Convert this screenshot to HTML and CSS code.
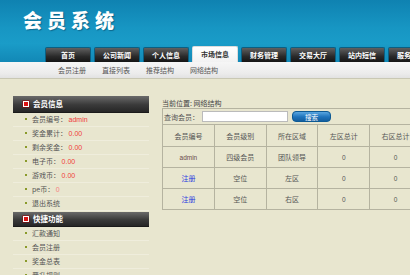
FILE: index.html
```html
<!DOCTYPE html>
<html lang="zh-CN">
<head>
    <meta charset="UTF-8">
    <title>会员系统</title>
    <link rel="stylesheet" href="styles.css">
</head>
<body>
    <div class="header">
        <div class="logo">会员系统</div>
        <div class="nav">
            <a class="tab">首页</a>
            <a class="tab">公司新闻</a>
            <a class="tab">个人信息</a>
            <a class="tab active">市场信息</a>
            <a class="tab">财务管理</a>
            <a class="tab">交易大厅</a>
            <a class="tab">站内短信</a>
            <a class="tab">服务中心</a>
        </div>
    </div>

    <div class="subnav">
        <a>会员注册</a>
        <a>直接列表</a>
        <a>推荐结构</a>
        <a>网络结构</a>
    </div>

    <div class="content">
        <div class="sidebar">
            <div class="side-title"><span class="mark"></span>会员信息</div>
            <ul class="side-list">
                <li>会员编号： <span class="val">admin</span></li>
                <li>奖金累计： <span class="val">0.00</span></li>
                <li>剩余奖金： <span class="val">0.00</span></li>
                <li>电子币： <span class="val">0.00</span></li>
                <li>游戏币： <span class="val">0.00</span></li>
                <li>pe币： <span class="val zero">0</span></li>
                <li>退出系统</li>
            </ul>
            <div class="side-title"><span class="mark"></span>快捷功能</div>
            <ul class="side-list">
                <li>汇款通知</li>
                <li>会员注册</li>
                <li>奖金总表</li>
                <li>晋升规则</li>
            </ul>
        </div>

        <div class="main">
            <div class="crumb">当前位置: 网络结构</div>
            <table class="grid">
                <tr class="search">
                    <td colspan="5">
                        <div class="search-row">
                            <span>查询会员：</span>
                            <input type="text" class="search-box">
                            <button class="btn">搜索</button>
                        </div>
                    </td>
                </tr>
                <tr class="head">
                    <td class="c1">会员编号</td>
                    <td class="c2">会员级别</td>
                    <td class="c3">所在区域</td>
                    <td class="c4">左区总计</td>
                    <td class="c5">右区总计</td>
                </tr>
                <tr>
                    <td class="user">admin</td>
                    <td>四级会员</td>
                    <td>团队领导</td>
                    <td class="num">0</td>
                    <td class="num">0</td>
                </tr>
                <tr>
                    <td><a class="reg">注册</a></td>
                    <td>空位</td>
                    <td>左区</td>
                    <td class="num">0</td>
                    <td class="num">0</td>
                </tr>
                <tr>
                    <td><a class="reg">注册</a></td>
                    <td>空位</td>
                    <td>右区</td>
                    <td class="num">0</td>
                    <td class="num">0</td>
                </tr>
            </table>
        </div>
    </div>
</body>
</html>
```

FILE: styles.css
```css
body {
    margin: 0;
    width: 540px;
    overflow: hidden;
    background-color: #e8e6cf;
    font-family: "Noto Sans CJK SC", "Liberation Sans", sans-serif;
    font-size: 7px;
    color: #555;
}

a {
    cursor: pointer;
}

.header {
    height: 62px;
    display: flex;
    flex-direction: column;
    background: linear-gradient(to bottom, #0f82b1 0%, #1796c3 45%, #1a9cc8 70%, #1288b6 100%);
}

.logo {
    padding: 10px 0 0 23px;
    font-size: 19px;
    line-height: 20px;
    font-weight: 900;
    letter-spacing: 5px;
    color: #fff;
    text-shadow: 1px 1px 1px rgba(0, 60, 90, 0.5);
}

.nav {
    margin-top: auto;
    padding-left: 45px;
    display: flex;
    gap: 3px;
    align-items: flex-end;
}

.tab {
    width: 44px;
    height: 14px;
    line-height: 14px;
    text-align: center;
    font-weight: bold;
    white-space: nowrap;
    color: #fff;
    background: linear-gradient(to bottom, #606060, #2a2a2a 60%, #151515);
    border: 1px solid #0b5f82;
    border-bottom: none;
    border-radius: 2px 2px 0 0;
}

.tab.active {
    height: 15px;
    line-height: 15px;
    color: #333;
    background: linear-gradient(to bottom, #ffffff, #f2f2f2);
    border-color: #dcdcdc;
}

.subnav {
    height: 16px;
    padding-left: 58px;
    display: flex;
    align-items: center;
    background: linear-gradient(to bottom, #f6f6f6, #ececec 70%, #e2e2e2);
    border-bottom: 1px solid #c9c8b4;
}

.subnav a {
    width: 44px;
    white-space: nowrap;
    color: #555;
}

.content {
    display: flex;
    align-items: flex-start;
}

.sidebar {
    width: 136px;
    margin: 17px 0 0 13px;
}

.side-title {
    height: 16px;
    line-height: 16px;
    padding-left: 10px;
    display: flex;
    align-items: center;
    gap: 4px;
    font-size: 7.5px;
    font-weight: bold;
    color: #fff;
    background: linear-gradient(to bottom, #6a6a6a, #3a3a3a 55%, #262626);
    border-bottom: 1px solid #1a1a1a;
}

.side-list + .side-title {
    margin-top: 1px;
    height: 14px;
    line-height: 14px;
}

.mark {
    width: 4px;
    height: 4px;
    background: #d11;
    border: 1px solid #fff;
    box-shadow: 0 0 0 0.5px #900;
}

.side-list {
    margin: 0;
    padding: 0;
    list-style: none;
}

.side-list li {
    height: 13px;
    line-height: 13px;
    padding-left: 19px;
    position: relative;
    border-bottom: 1px solid #efeddc;
    color: #555;
    white-space: nowrap;
}

.side-list li::before {
    content: "";
    position: absolute;
    left: 12px;
    top: 5px;
    width: 2px;
    height: 2px;
    background: #8a9a2a;
}

.val {
    color: #f03c3c;
    font-family: "Liberation Sans", sans-serif;
}

.val.zero {
    color: #f78080;
}

.main {
    margin: 19px 0 0 13px;
}

.crumb {
    height: 10px;
    line-height: 10px;
    color: #444;
}

.grid {
    width: 260px;
    border-collapse: collapse;
    table-layout: fixed;
}

.grid td {
    border: 1px solid #b5b3a0;
    text-align: center;
    padding: 0;
    height: 20px;
    white-space: nowrap;
}

.grid tr.search td {
    height: 15px;
    text-align: left;
}

.search-row {
    display: flex;
    align-items: center;
    gap: 3px;
    padding-left: 1px;
}

.search-box {
    width: 84px;
    height: 9px;
    margin: 0;
    padding: 0;
    border: 1px solid #bbb;
    background: #fff;
}

.btn {
    width: 39px;
    height: 11px;
    padding: 0;
    margin-left: 1px;
    font-family: inherit;
    font-size: 6.5px;
    line-height: 10px;
    color: #fff;
    border: 1px solid #0e5a94;
    border-radius: 4px;
    background: linear-gradient(to bottom, #59a6e0, #1e73bb 55%, #145f9f);
}

.grid tr.head td {
    height: 21px;
}

.c1 { width: 60px; }
.c2 { width: 48px; }
.c3 { width: 48px; }
.c4 { width: 47px; }
.c5 { width: 47px; }

.user {
    font-family: "Liberation Sans", sans-serif;
    color: #6a4a4a;
    font-size: 6.5px;
}

.num {
    font-family: "Liberation Sans", sans-serif;
    font-size: 6.5px;
}

.reg {
    color: #2b3de0;
}
```
